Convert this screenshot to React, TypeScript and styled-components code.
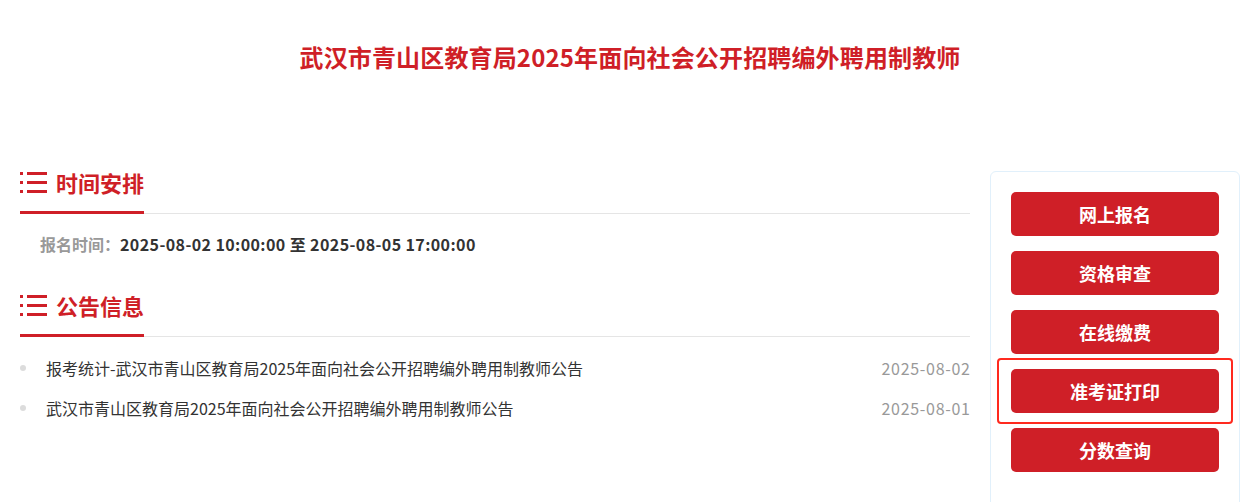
import React from "react";
import styled, { createGlobalStyle } from "styled-components";

const Global = createGlobalStyle`
  html, body { margin: 0; padding: 0; background: #fff; }
  body { font-family: "Microsoft YaHei", "Noto Sans CJK SC", "Noto Sans", sans-serif; overflow: hidden; }
  * { box-sizing: border-box; }
`;

const RED = "#cf1f27";

const Page = styled.div`
  width: 1240px;
  height: 502px;
  overflow: hidden;
`;

const Title = styled.h1`
  margin: 0;
  padding: 40px 0 0 20px;
  height: 171px;
  text-align: center;
  font-size: 24px;
  line-height: 34px;
  font-weight: 700;
  color: ${RED};
  letter-spacing: 0.15px;
`;

const Body = styled.div`
  display: flex;
  gap: 20px;
  padding-left: 20px;
`;

const Main = styled.div`
  width: 950px;
  display: flex;
  flex-direction: column;
`;

const SectionHead = styled.div`
  position: relative;
  display: flex;
  align-items: center;
  gap: 9px;
  height: 43px;
  border-bottom: 1px solid #e5e5e5;
  padding-bottom: 20px;
`;

const HeadBar = styled.span`
  position: absolute;
  left: 0;
  bottom: -1px;
  width: 124px;
  height: 3px;
  background: ${RED};
`;

const HeadText = styled.span`
  font-size: 22px;
  font-weight: 700;
  color: ${RED};
  line-height: 22px;
`;

const ListIcon = () => (
  <svg width="27" height="22" viewBox="0 0 27 22">
    <g fill={RED}>
      <rect x="0" y="1" width="3" height="3" />
      <rect x="7" y="1" width="20" height="3" />
      <rect x="0" y="10" width="3" height="3" />
      <rect x="7" y="10" width="20" height="3" />
      <rect x="0" y="19" width="3" height="3" />
      <rect x="7" y="19" width="20" height="3" />
    </g>
  </svg>
);

const TimeRow = styled.div`
  padding: 18px 0 0 20px;
  height: 80px;
  font-size: 16px;
  font-weight: 700;
  line-height: 24px;
  color: #333;
`;

const TimeLabel = styled.span`
  color: #999;
`;

const TimeValue = styled.span`
  letter-spacing: 0.4px;
`;

const NoticeList = styled.ul`
  list-style: none;
  margin: 0;
  padding: 11px 0 0 0;
`;

const NoticeItem = styled.li`
  display: flex;
  align-items: center;
  height: 40px;
  font-size: 16px;
  color: #333;
`;

const Dot = styled.span`
  width: 6px;
  height: 6px;
  border-radius: 50%;
  background: #dcdcdc;
  margin: 0 20px 0 0;
`;

const NoticeTitle = styled.span`
  flex: 1;
`;

const NoticeDate = styled.span`
  color: #999;
  letter-spacing: 0.7px;
  margin-right: -0.7px;
`;

const Side = styled.div`
  width: 250px;
  height: 400px;
  border: 1px solid #e1f0fb;
  border-radius: 6px;
  padding: 20px 19px 20px 20px;
  display: flex;
  flex-direction: column;
  gap: 15px;
`;

const ActionWrap = styled.div`
  position: relative;
`;

const Action = styled.button`
  width: 208px;
  height: 44px;
  border: none;
  border-radius: 5px;
  background: ${RED};
  color: #fff;
  font-family: inherit;
  font-size: 18px;
  font-weight: 700;
  cursor: pointer;
  display: block;
`;

const Highlight = styled.span`
  position: absolute;
  left: -14px;
  top: -11px;
  width: 236px;
  height: 66px;
  border: 2px solid #ff2a1f;
  border-radius: 4px;
  pointer-events: none;
`;

const notices = [
  { title: "报考统计-武汉市青山区教育局2025年面向社会公开招聘编外聘用制教师公告", date: "2025-08-02" },
  { title: "武汉市青山区教育局2025年面向社会公开招聘编外聘用制教师公告", date: "2025-08-01" },
];

const actions = ["网上报名", "资格审查", "在线缴费", "准考证打印", "分数查询"];

export default function App() {
  return (
    <Page>
      <Global />
      <Title>武汉市青山区教育局2025年面向社会公开招聘编外聘用制教师</Title>
      <Body>
        <Main>
          <SectionHead>
            <ListIcon />
            <HeadText>时间安排</HeadText>
            <HeadBar />
          </SectionHead>
          <TimeRow>
            <TimeLabel>报名时间：</TimeLabel>
            <TimeValue>2025-08-02 10:00:00 至 2025-08-05 17:00:00</TimeValue>
          </TimeRow>
          <SectionHead>
            <ListIcon />
            <HeadText>公告信息</HeadText>
            <HeadBar />
          </SectionHead>
          <NoticeList>
            {notices.map((n) => (
              <NoticeItem key={n.title}>
                <Dot />
                <NoticeTitle>{n.title}</NoticeTitle>
                <NoticeDate>{n.date}</NoticeDate>
              </NoticeItem>
            ))}
          </NoticeList>
        </Main>
        <Side>
          {actions.map((a, i) => (
            <ActionWrap key={a}>
              <Action>{a}</Action>
              {i === 3 && <Highlight />}
            </ActionWrap>
          ))}
        </Side>
      </Body>
    </Page>
  );
}
